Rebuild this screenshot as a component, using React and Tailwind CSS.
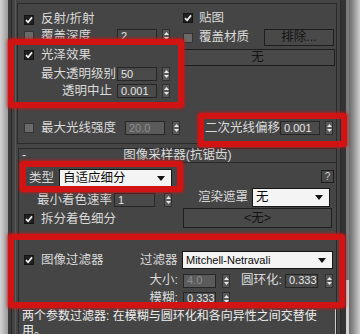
import React from 'react'

// small widgets in 3ds Max dark style
const Check = ({ on }) =>
  on ? (
    <span className="w-[10px] h-[10px] shrink-0 flex items-center justify-center bg-[#202020] border border-[#141414]">
      <svg width="8" height="8" viewBox="0 0 8 8">
        <path d="M1 4.2 3.1 6.3 7 1.4" fill="none" stroke="#f2f2f2" strokeWidth="1.7" />
      </svg>
    </span>
  ) : (
    <span className="w-[10px] h-[10px] shrink-0 bg-[#6a6a6a] border border-[#343434]" />
  )

const Spin = ({ className = '' }) => (
  <span className={`w-[8px] h-[14px] shrink-0 flex flex-col items-center justify-center gap-[2px] bg-[#5a5a5a] border border-[#303030] ${className}`}>
    <svg width="5" height="3" viewBox="0 0 5 3">
      <path d="M0 3 2.5 0 5 3Z" fill="#e8e8e8" />
    </svg>
    <svg width="5" height="3" viewBox="0 0 5 3">
      <path d="M0 0 2.5 3 5 0Z" fill="#e8e8e8" />
    </svg>
  </span>
)

const Field = ({ v, w = 'w-[40px]', off }) => (
  <span
    className={`${w} h-[14px] shrink-0 flex items-center pl-[3px] text-[11px] border border-[#262626] ${
      off ? 'bg-[#5b5b5b] text-[#8e8e8e]' : 'bg-[#4a4a4a] text-[#e4e4e4]'
    }`}
  >
    {v}
  </span>
)

const Drop = ({ v, className = '' }) => (
  <span className={`shrink-0 flex items-center bg-[#f4f4f4] border border-[#161616] text-[#0a0a0a] pl-[3px] pr-[6px] ${className}`}>
    <span className="flex-1 whitespace-nowrap">{v}</span>
    <svg width="8" height="5" viewBox="0 0 8 5">
      <path d="M0 0H8L4 5Z" fill="#111" />
    </svg>
  </span>
)

const Btn = ({ children, className = '' }) => (
  <span className={`shrink-0 flex items-center justify-center border border-[#1e1e1e] bg-[#494949] text-[#141414] ${className}`}>
    {children}
  </span>
)

const Mark = ({ className }) => (
  <div className={`absolute border-[6px] border-[#d21313] rounded-[3px] shadow-[0_0_3px_1px_rgba(210,20,20,0.7)] ${className}`} />
)

export default function App() {
  return (
    <div className="relative w-[360px] h-[334px] overflow-hidden flex bg-[#454545] text-[12.5px] leading-none text-[#dadada] font-['Liberation_Sans','Noto_Sans_CJK_SC',sans-serif]">
      {/* left edge of the window */}
      <div className="w-[8px] shrink-0 bg-gradient-to-r from-[#d4d4d4] to-[#9a9a9a]" />
      <div className="w-[3px] shrink-0 bg-[#3b3b3b]" />
      <div className="w-[1px] shrink-0 bg-[#262626]" />
      <div className="w-[3px] shrink-0 bg-[#444]" />

      <main className="w-[326px] shrink-0 flex flex-col border-l border-r border-l-[#5a5a5a] border-r-[#2a2a2a]">
        {/* global switches group */}
        <section className="ml-[1px] mt-[3px] w-[320px] border border-[#2a2a2a] pb-[7px]">
          <div className="flex h-[116px]">
            <div className="w-[165px] pl-[6px] pt-[8px] flex flex-col">
              <div className="h-[15px] flex items-center">
                <Check on />
                <span className="ml-[7px]">反射/折射</span>
              </div>
              <div className="h-[14px] mt-[2px] flex items-center">
                <span className="w-[93px] flex items-center">
                  <Check />
                  <span className="ml-[7px]">覆盖深度</span>
                </span>
                <Field v="2" />
                <Spin className="ml-[5px]" />
              </div>
              <div className="h-[14px] mt-[5px] flex items-center">
                <Check on />
                <span className="ml-[7px]">光泽效果</span>
              </div>
              <div className="h-[14px] mt-[5px] flex items-center">
                <span className="w-[93px] pl-[17px] whitespace-nowrap">最大透明级别</span>
                <Field v="50" />
                <Spin className="ml-[5px]" />
              </div>
              <div className="h-[14px] mt-[3px] flex items-center">
                <span className="w-[93px] pl-[38px]">透明中止</span>
                <Field v="0.001" />
                <Spin className="ml-[5px]" />
              </div>
            </div>
            <div className="flex-1 pt-[7px] flex flex-col">
              <div className="h-[14px] flex items-center">
                <Check on />
                <span className="ml-[6px]">贴图</span>
              </div>
              <div className="h-[17px] mt-[4px] flex items-center">
                <Check />
                <span className="ml-[6px]">覆盖材质</span>
                <Btn className="ml-auto mr-[2px] w-[70px] h-[17px]">排除...</Btn>
              </div>
              <Btn className="mt-[3px] ml-[-3px] w-[155px] h-[17px]">无</Btn>
            </div>
          </div>
          <div className="h-[16px] flex items-center pl-[6px]">
            <span className="w-[101px] flex items-center">
              <Check />
              <span className="ml-[7px]">最大光线强度</span>
            </span>
            <Field v="20.0" off />
            <Spin className="ml-[7px]" />
            <span className="ml-[25px] w-[75px] whitespace-nowrap">二次光线偏移</span>
            <Field v="0.001" />
            <Spin className="ml-[5px]" />
          </div>
        </section>

        {/* image sampler rollout */}
        <section className="ml-[2px] mt-[4px] w-[319px] flex-1 flex flex-col border-l border-r border-[#2a2a2a]">
          <div className="h-[15px] flex items-center border-t border-b border-[#2a2a2a]">
            <span className="w-[30px] pl-[3px] text-[#e0e0e0]">-</span>
            <span className="flex-1 text-center">图像采样器(抗锯齿)</span>
            <span className="w-[30px]" />
          </div>

          <div className="flex h-[65px]">
            <div className="w-[164px] pt-[6px] flex flex-col">
              <div className="h-[18px] flex items-center pl-[10px]">
                <span>类型</span>
                <Drop v="自适应细分" className="ml-[5px] w-[113px] h-[18px]" />
              </div>
              <div className="h-[14px] mt-[6px] flex items-center">
                <span className="w-[95px] pl-[18px] whitespace-nowrap">最小着色速率</span>
                <Field v="1" w="w-[41px]" />
                <Spin className="ml-[9px]" />
              </div>
              <div className="h-[14px] mt-[5px] flex items-center pl-[5px]">
                <Check on />
                <span className="ml-[7px]">拆分着色细分</span>
              </div>
            </div>
            <div className="flex-1 pt-[7px] flex flex-col">
              <div className="h-[13px] flex justify-end pr-[2px]">
                <Btn className="w-[13px] h-[13px] text-[10px] text-[#cfcfcf] bg-[#555]">?</Btn>
              </div>
              <div className="h-[19px] mt-[5px] flex items-center">
                <span className="ml-[15px] w-[54px]">渲染遮罩</span>
                <Drop v="无" className="w-[78px] h-[19px]" />
              </div>
              <Btn className="mt-[1px] w-[149px] h-[20px] text-[#2a2a2a]">&lt;无&gt;</Btn>
            </div>
          </div>

          {/* image filter */}
          <div className="mt-[23px] h-[18px] flex items-center">
            <span className="w-[121px] pl-[5px] flex items-center">
              <Check on />
              <span className="ml-[7px]">图像过滤器</span>
            </span>
            <span className="w-[38px] text-right pr-[1px] whitespace-nowrap">过滤器</span>
            <Drop v="Mitchell-Netravali" className="ml-[4px] w-[151px] h-[18px] text-[11px]" />
          </div>
          <div className="mt-[4px] h-[15px] flex items-center">
            <span className="w-[121px]" />
            <span className="w-[38px] text-right">大小:</span>
            <span className="ml-[5px]" />
            <Field v="4.0" w="w-[33px]" off />
            <Spin className="ml-[6px]" />
            <span className="ml-[11px] w-[44px] whitespace-nowrap">圆环化:</span>
            <Field v="0.333" w="w-[33px]" />
            <Spin className="ml-[7px]" />
          </div>
          <div className="mt-[3px] h-[15px] flex items-center">
            <span className="w-[121px]" />
            <span className="w-[38px] text-right">模糊:</span>
            <span className="ml-[5px]" />
            <Field v="0.333" w="w-[33px]" />
            <Spin className="ml-[6px]" />
          </div>

          <div className="mt-[3px] w-[317px] pl-[3px] border-r border-[#d0d0d0] text-[12px] text-[#efefef] leading-[15px] whitespace-nowrap">
            两个参数过滤器: 在模糊与圆环化和各向异性之间交替使
            <br />
            用。
          </div>
        </section>
      </main>

      {/* right edge: scrollbar and window behind */}
      <div className="w-[5px] shrink-0 bg-[#333]" />
      <div className="w-[3px] shrink-0 flex flex-col bg-[#7c7c7c]">
        <div className="flex-1" />
        <div className="h-[54px] bg-[#d2d2d2]" />
      </div>
      <div className="flex-1 bg-gradient-to-r from-[#6a6a6a] to-[#cfcfcf]" />

      {/* red annotation frames */}
      <Mark className="left-[8px] top-[39px] w-[176px] h-[69px]" />
      <Mark className="left-[198px] top-[113px] w-[149px] h-[34px]" />
      <Mark className="left-[20px] top-[161px] w-[163px] h-[31px]" />
      <Mark className="left-[8px] top-[234px] w-[337px] h-[74px]" />
    </div>
  )
}
